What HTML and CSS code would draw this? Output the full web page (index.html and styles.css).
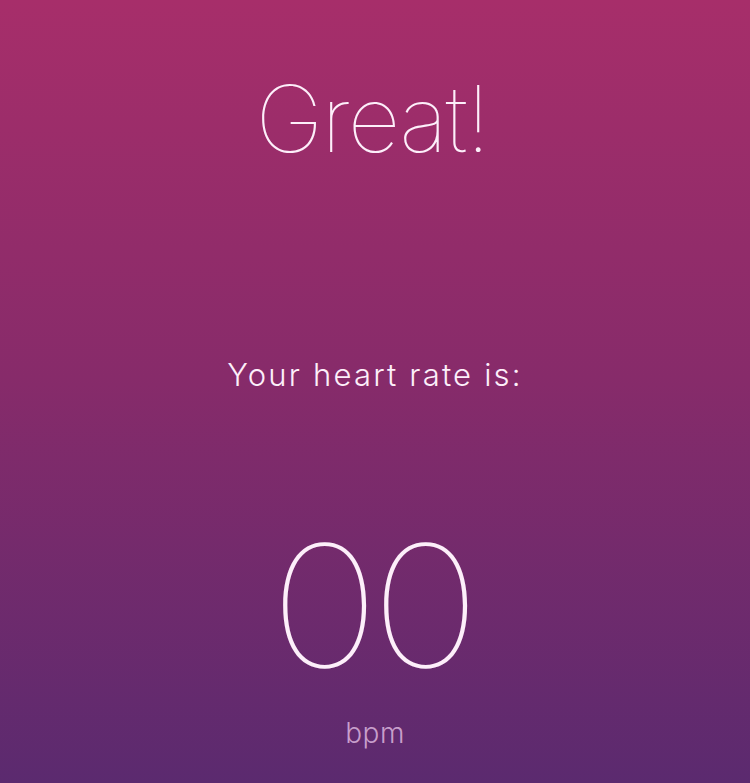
FILE: index.html
```html
<!DOCTYPE html>
<html>
<head>
<meta charset="utf-8">
<link rel="stylesheet" href="styles.css">
</head>
<body>
<main class="screen">
  <h1 class="title">Great!</h1>
  <p class="label">Your heart rate is:</p>
  <div class="value"><span class="digits">00</span></div>
  <div class="unit">bpm</div>
</main>
</body>
</html>
```
FILE: styles.css
```css
html, body {
  margin: 0;
  padding: 0;
}
body {
  width: 750px;
  height: 783px;
  overflow: hidden;
}
.screen {
  box-sizing: border-box;
  width: 750px;
  height: 783px;
  background: linear-gradient(180deg, #a72e6a 0%, #872b6a 48%, #5b2a6f 100%);
  display: flex;
  flex-direction: column;
  align-items: center;
  font-family: Inter, "Noto Sans", sans-serif;
  color: #fdeffa;
}
.title {
  margin: 64px 0 0 0;
  font-size: 92px;
  font-weight: 100;
  line-height: 110px;
  letter-spacing: -2px;
  padding-left: 0;
  margin-right: 6px;
}
.label {
  margin: 181px 0 0 0;
  font-size: 31px;
  font-weight: 300;
  line-height: 40px;
  letter-spacing: 2.2px;
}
.value {
  margin-top: 126px;
  font-size: 169px;
  font-weight: 100;
  line-height: 170px;
  height: 170px;
}
.digits {
  display: inline-block;
  letter-spacing: -8px;
  margin-right: 8px;
  transform: scaleX(1.1);
}
.unit {
  margin-top: 25px;
  font-size: 28px;
  font-weight: 300;
  line-height: 34px;
  letter-spacing: 0.5px;
  color: rgba(240, 205, 240, 0.72);
}
```
